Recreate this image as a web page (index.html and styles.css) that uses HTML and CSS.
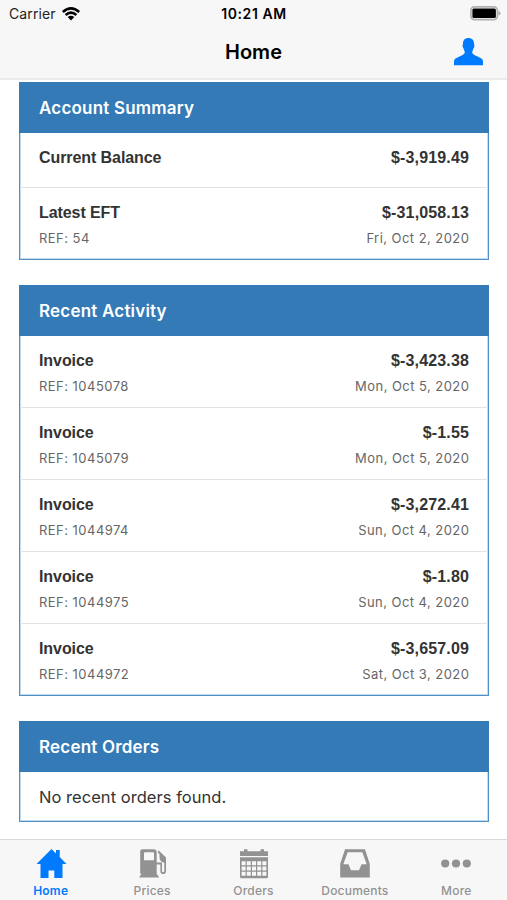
FILE: index.html
```html
<!DOCTYPE html>
<html lang="en">
<head>
<meta charset="utf-8">
<title>Home</title>
<link rel="stylesheet" href="styles.css">
</head>
<body>
<div class="app">
  <header class="top">
    <div class="status">
      <div class="carrier"><span>Carrier</span>
        <svg width="18" height="14" viewBox="0 0 18 14"><g fill="none" stroke="#000" stroke-width="2.5"><path d="M.8 5Q9-2.3 17.2 5"/><path d="M3.6 8Q9 3.2 14.4 8"/></g><path d="M5.7 10.1Q9 7.4 12.3 10.1L9 13.5Z"/></svg>
      </div>
      <div class="time">10:21 AM</div>
      <svg class="battery" width="31" height="15" viewBox="0 0 31 15"><rect x=".9" y=".9" width="26.5" height="12.8" rx="3.6" fill="#f7f7f7" stroke="#b0b0b0" stroke-width="1.7"/><rect x="2.4" y="2.6" width="23.5" height="9.4" rx="1.5"/><path d="M28.5 5Q30.5 5.6 30.5 7.3T28.5 9.6Z" fill="#aaa"/></svg>
    </div>
    <div class="nav">
      <h1 class="title">Home</h1>
      <svg class="person" width="29" height="28" viewBox="0 0 29 28"><path fill="#007aff" d="M14.4 0C18 0 20.2 2.2 20 6C20.8 6.5 20.5 9.6 19.4 10.5C19.2 12.4 18.2 13 18.2 14.3C18.2 16.2 20 16.8 22.5 18L27.5 20.5Q29 21.5 29 23.5V27.2H0V23.5Q0 21.5 1.5 20.5L6.5 18C9 16.8 10.8 16.2 10.8 14.3C10.8 13 9.8 12.4 9.6 10.5C8.5 9.6 8.2 6.5 9 6C8.8 2.2 10.8 0 14.4 0Z"/></svg>
    </div>
  </header>
  <main class="content">
    <section class="card">
      <h2 class="card-head">Account Summary</h2>
      <div class="row short"><div class="line main"><span>Current Balance</span><span class="amount">$-3,919.49</span></div></div>
      <div class="row"><div class="line main"><span>Latest EFT</span><span class="amount">$-31,058.13</span></div><div class="line sub"><span>REF: 54</span><span class="date">Fri, Oct 2, 2020</span></div></div>
    </section>
    <section class="card">
      <h2 class="card-head">Recent Activity</h2>
      <div class="row"><div class="line main"><span>Invoice</span><span class="amount">$-3,423.38</span></div><div class="line sub"><span>REF: 1045078</span><span class="date">Mon, Oct 5, 2020</span></div></div>
      <div class="row"><div class="line main"><span>Invoice</span><span class="amount">$-1.55</span></div><div class="line sub"><span>REF: 1045079</span><span class="date">Mon, Oct 5, 2020</span></div></div>
      <div class="row"><div class="line main"><span>Invoice</span><span class="amount">$-3,272.41</span></div><div class="line sub"><span>REF: 1044974</span><span class="date">Sun, Oct 4, 2020</span></div></div>
      <div class="row"><div class="line main"><span>Invoice</span><span class="amount">$-1.80</span></div><div class="line sub"><span>REF: 1044975</span><span class="date">Sun, Oct 4, 2020</span></div></div>
      <div class="row"><div class="line main"><span>Invoice</span><span class="amount">$-3,657.09</span></div><div class="line sub"><span>REF: 1044972</span><span class="date">Sat, Oct 3, 2020</span></div></div>
    </section>
    <section class="card">
      <h2 class="card-head">Recent Orders</h2>
      <p class="empty">No recent orders found.</p>
    </section>
  </main>
  <nav class="tabs">
    <a class="tab active">
      <svg width="32" height="30" viewBox="0 0 32 30"><path d="M16.5 0L21 4.5V1H24.7V8L31.5 15H27.5V29H19.3V21.5H13.5V29H5.5V15H1.5Z"/></svg>
      <span>Home</span></a>
    <a class="tab">
      <svg width="32" height="30" viewBox="0 0 32 30"><path fill-rule="evenodd" d="M6.3.3H17.7Q20.7.3 20.7 3.3V24.8L23.2 28.5H3L5.5 24.8H4.2V3Q4.2.3 6.3.3ZM9 3.2Q8 3.2 8 4.2V11.3H18V4.2Q18 3.2 17 3.2Z"/><path d="M22.7 1.5L30 8.5V22.2Q30 25 27.2 25T24.4 22.2V15.5H20V13.5H26V22Q26 23.3 27.2 23.3T28.3 22V13.8Q23.5 13 23.5 8.3V5.5L21.7 3Z"/></svg>
      <span>Prices</span></a>
    <a class="tab">
      <svg width="32" height="30" viewBox="0 0 32 30"><path d="M2 2.3H6V.2H9.5V2.3H22.5V.2H26V2.3H30V7H2Z"/><path fill-rule="evenodd" d="M2 8.3H30V27.7Q30 29.2 28.5 29.2H3.5Q2 29.2 2 27.7ZM3.6 12.3v4h4v-4zM8.8 12.3v4h4v-4zM14 12.3v4h4v-4zM19.2 12.3v4h4v-4zM24.4 12.3v4h4v-4zM3.6 17.5v4h4v-4zM8.8 17.5v4h4v-4zM14 17.5v4h4v-4zM19.2 17.5v4h4v-4zM24.4 17.5v4h4v-4zM3.6 22.7v4h4v-4zM8.8 22.7v4h4v-4zM14 22.7v4h4v-4zM19.2 22.7v4h4v-4zM24.4 22.7v4h4v-4z"/></svg>
      <span>Orders</span></a>
    <a class="tab">
      <svg width="32" height="30" viewBox="0 0 32 30"><path fill-rule="evenodd" d="M6 .3H26L30.8 15V28.5H1.2V15ZM8.7 3.3L4.3 15.3H9.5L12 21.3H20L22.5 15.3H27.7L23.3 3.3Z"/></svg>
      <span>Documents</span></a>
    <a class="tab">
      <svg width="32" height="30" viewBox="0 0 32 30"><circle cx="5.2" cy="14.5" r="4.1"/><circle cx="16" cy="14.5" r="4.1"/><circle cx="26.8" cy="14.5" r="4.1"/></svg>
      <span>More</span></a>
  </nav>
</div>
</body>
</html>
```
FILE: styles.css
```css
* { box-sizing: border-box; }
body { margin: 0; background: #fff; font-family: Inter, "Liberation Sans", sans-serif; color: #333; }
h1, h2, p { margin: 0; }
svg { display: block; flex: none; }
.app { width: 507px; height: 900px; display: flex; flex-direction: column; overflow: hidden; }
.top { height: 80px; flex: none; background: #f7f7f7; border-bottom: 2px solid #ebebeb; color: #000; }
.status { height: 27px; display: grid; grid-template-columns: 1fr auto 1fr; align-items: center; padding: 0 6px 0 9px; font-size: 14px; }
.carrier { display: flex; align-items: center; gap: 6px; letter-spacing: 0.1px; color: #222; }
.time { font-weight: 600; letter-spacing: 0.55px; margin-left: -2px; }
.battery { justify-self: end; }
.nav { height: 49px; display: grid; grid-template-columns: 1fr auto 1fr; align-items: center; padding: 0 24px; }
.title { grid-column: 2; font-size: 20px; line-height: 24px; font-weight: 600; }
.person { justify-self: end; }
.content { flex: 1; padding: 2px 18px 0 19px; display: flex; flex-direction: column; gap: 25px; }
.card { border: 1px solid #4e8fc6; box-shadow: inset 0 0 0 1px #c3dbef; }
.card-head { height: 51px; margin: -1px -1px 0; padding-left: 20px; background: #337ab7; color: #fff; font-size: 17px; line-height: 52px; font-weight: 600; letter-spacing: 0.2px; }
.row { height: 72px; padding: 14px 19px 0; border-top: 1px solid #e1e3e5; }
.card-head + .row { height: 71px; padding-top: 13px; border-top-color: transparent; }
.card-head + .row.short { height: 54px; }
.line { display: flex; justify-content: space-between; }
.main { font-family: "Liberation Sans", Arial, sans-serif; font-weight: 700; font-size: 16px; line-height: 22px; letter-spacing: -0.08px; }
.amount { letter-spacing: 0.14px; }
.sub { margin-top: 3px; font-size: 13px; line-height: 22px; color: #666; letter-spacing: 0.47px; }
.date { margin-right: -0.4px; letter-spacing: 0.45px; }
.empty { padding: 0 19px; height: 49px; font-size: 16.5px; line-height: 50px; letter-spacing: 0.04px; }
.tabs { height: 61px; flex: none; display: flex; background: #f7f7f7; border-top: 1px solid #d8d8d8; }
.tab { flex: 1; display: flex; flex-direction: column; align-items: center; padding-top: 9px; color: #929292; font-size: 12px; line-height: 16px; font-weight: 500; letter-spacing: 0.2px; }
.tab svg { fill: currentColor; margin-bottom: 4px; }
.tab.active { color: #007aff; font-weight: 600; }
```
